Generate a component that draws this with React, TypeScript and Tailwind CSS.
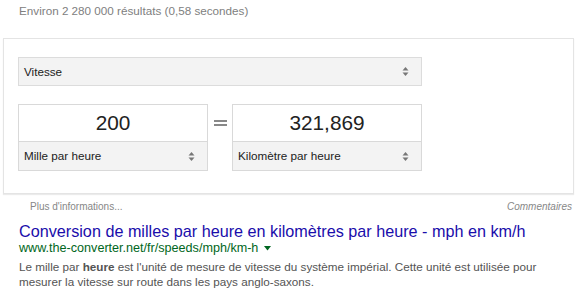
import React from "react";

const Arrows = () => (
  <svg width="7" height="11" viewBox="0 0 7 11" className="shrink-0">
    <path d="M0.5 4.5 L3.5 1 L6.5 4.5 Z" fill="#777" />
    <path d="M0.5 6.5 L3.5 10 L6.5 6.5 Z" fill="#777" />
  </svg>
);

const UnitBox = ({ value, unit }: { value: string; unit: string }) => (
  <div className="w-[190px] border border-[#d9d9d9] flex flex-col">
    <div className="h-[37px] bg-white flex items-center justify-center text-[20.8px] text-[#222] border-b border-[#d9d9d9]">
      {value}
    </div>
    <div className="h-[28px] bg-[#f3f3f3] flex items-center justify-between pl-[5px] pr-[12px] text-[11.7px] text-[#222]">
      <span>{unit}</span>
      <Arrows />
    </div>
  </div>
);

export default function App() {
  return (
    <div
      className="w-[583px] h-[292px] bg-white overflow-hidden"
      style={{ fontFamily: '"Liberation Sans", Arial, sans-serif' }}
    >
      <div className="pl-[19px] pt-[3px] h-[38px] text-[11.7px] text-[#808080] leading-[16px]">
        Environ 2 280 000 résultats (0,58 secondes)
      </div>
      <div className="ml-[3px] w-[571px] h-[156px] border border-[#e4e4e4] shadow-[0_1px_1px_rgba(0,0,0,0.08)] pl-[14px] pt-[18px]">
        <div className="w-[404px] h-[29px] bg-[#f3f3f3] border border-[#dcdcdc] flex items-center justify-between pl-[5px] pr-[12px] text-[11.7px] text-[#222]">
          <span>Vitesse</span>
          <Arrows />
        </div>
        <div className="mt-[18px] flex items-start">
          <UnitBox value="200" unit="Mille par heure" />
          <div className="w-[24px] h-[38px] flex items-center justify-center">
            <div className="flex flex-col gap-[2px]">
              <div className="w-[13px] h-[2px] bg-[#888]" />
              <div className="w-[13px] h-[2px] bg-[#888]" />
            </div>
          </div>
          <UnitBox value="321,869" unit="Kilomètre par heure" />
        </div>
      </div>
      <div className="flex justify-between items-center pl-[30px] pr-[11px] mt-[6px] h-[13px] text-[10px] leading-[13px] text-[#878787]">
        <span>Plus d'informations...</span>
        <span className="italic">Commentaires</span>
      </div>
      <div className="pl-[19px] mt-[9px]">
        <div className="text-[16.2px] leading-[18px] text-[#1a0dab] whitespace-nowrap">
          Conversion de milles par heure en kilomètres par heure - mph en km/h
        </div>
        <div className="text-[12.6px] leading-[16px] text-[#006621] flex items-center">
          www.the-converter.net/fr/speeds/mph/km-h
          <svg width="7" height="5" viewBox="0 0 7 5" className="ml-[6px]">
            <path d="M0 0 L7 0 L3.5 4.5 Z" fill="#006621" />
          </svg>
        </div>
        <div className="text-[11.7px] leading-[15px] text-[#545454] mt-[3px] pr-[20px]">
          Le mille par <b className="font-bold text-[#545454]">heure</b> est l'unité de mesure de vitesse du système impérial. Cette unité est utilisée pour mesurer la vitesse sur route dans les pays anglo-saxons.
        </div>
      </div>
    </div>
  );
}
